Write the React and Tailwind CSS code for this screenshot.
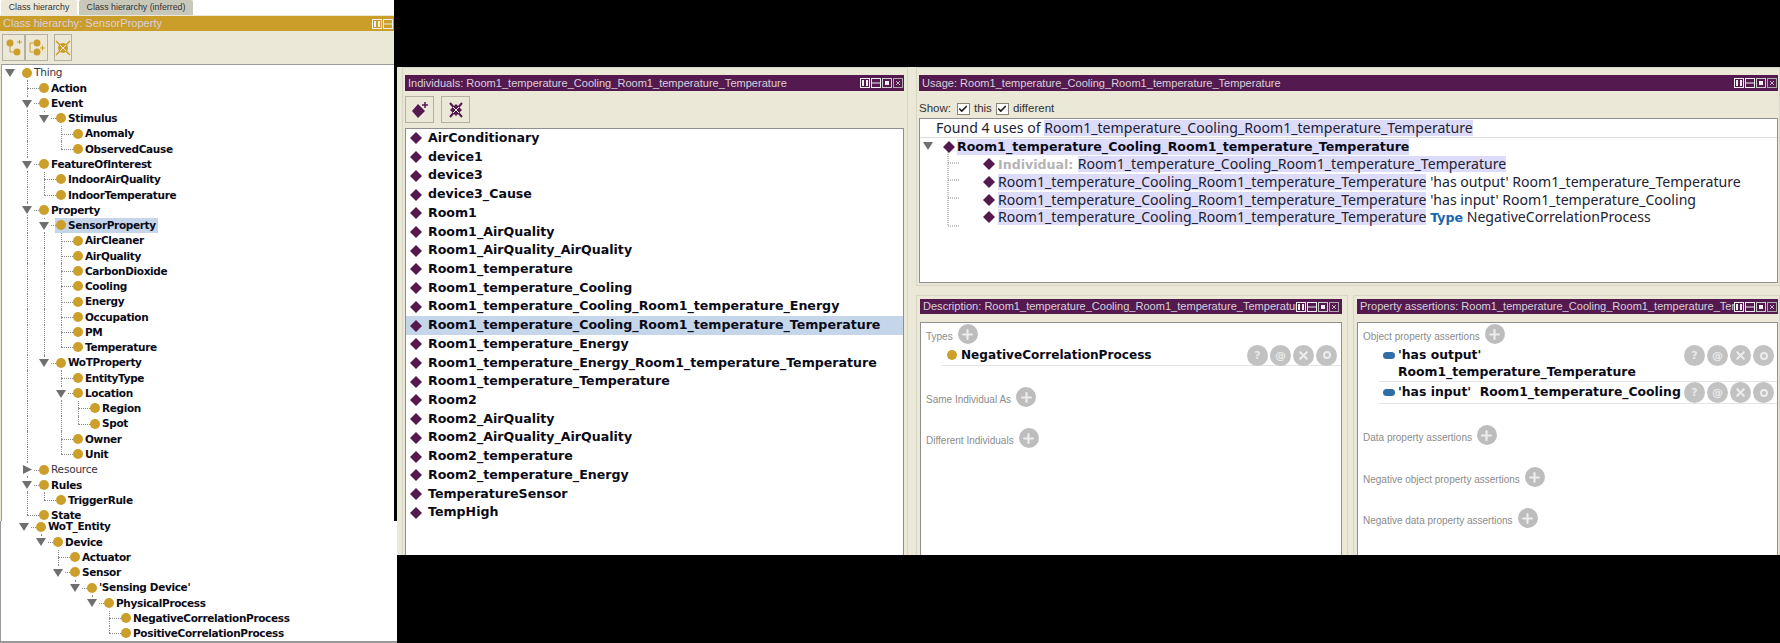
import { Check, Plus, X } from "lucide-react";

const FULL = "Room1_temperature_Cooling_Room1_temperature_Temperature";

const classTree = {
  name: "Thing",
  light: true,
  children: [
    { name: "Action" },
    {
      name: "Event",
      children: [
        {
          name: "Stimulus",
          children: [{ name: "Anomaly" }, { name: "ObservedCause" }],
        },
      ],
    },
    {
      name: "FeatureOfInterest",
      children: [{ name: "IndoorAirQuality" }, { name: "IndoorTemperature" }],
    },
    {
      name: "Property",
      children: [
        {
          name: "SensorProperty",
          selected: true,
          children: [
            { name: "AirCleaner" },
            { name: "AirQuality" },
            { name: "CarbonDioxide" },
            { name: "Cooling" },
            { name: "Energy" },
            { name: "Occupation" },
            { name: "PM" },
            { name: "Temperature" },
          ],
        },
        {
          name: "WoTProperty",
          children: [
            { name: "EntityType" },
            {
              name: "Location",
              children: [{ name: "Region" }, { name: "Spot" }],
            },
            { name: "Owner" },
            { name: "Unit" },
          ],
        },
      ],
    },
    { name: "Resource", light: true, collapsed: true },
    { name: "Rules", children: [{ name: "TriggerRule" }] },
    { name: "State" },
  ],
};

const entityTree = {
  name: "WoT_Entity",
  children: [
    {
      name: "Device",
      children: [
        { name: "Actuator" },
        {
          name: "Sensor",
          children: [
            {
              name: "'Sensing Device'",
              children: [
                {
                  name: "PhysicalProcess",
                  children: [
                    { name: "NegativeCorrelationProcess" },
                    { name: "PositiveCorrelationProcess" },
                  ],
                },
              ],
            },
          ],
        },
      ],
    },
  ],
};

const individuals = [
  "AirConditionary",
  "device1",
  "device3",
  "device3_Cause",
  "Room1",
  "Room1_AirQuality",
  "Room1_AirQuality_AirQuality",
  "Room1_temperature",
  "Room1_temperature_Cooling",
  "Room1_temperature_Cooling_Room1_temperature_Energy",
  FULL,
  "Room1_temperature_Energy",
  "Room1_temperature_Energy_Room1_temperature_Temperature",
  "Room1_temperature_Temperature",
  "Room2",
  "Room2_AirQuality",
  "Room2_AirQuality_AirQuality",
  "Room2_temperature",
  "Room2_temperature_Energy",
  "TemperatureSensor",
  "TempHigh",
];

const flatten = (node, level, guides, last, out) => {
  out.push({ node, level, guides, last });
  const kids = node.children || [];
  kids.forEach((kid, i) => {
    flatten(kid, level + 1, [...guides, !last], i === kids.length - 1, out);
  });
  return out;
};

const Triangle = ({ right }) => (
  <svg width="11" height="11" viewBox="0 0 11 11">
    {right ? (
      <polygon points="1,1 10,5.5 1,10" fill="#6f6f6f" />
    ) : (
      <polygon points="0,2 10,2 5,10" fill="#6f6f6f" />
    )}
  </svg>
);

const Diamond = () => (
  <svg width="12" height="12" viewBox="0 0 12 12" className="shrink-0">
    <polygon points="6,0 12,6 6,12 0,6" fill="#541a4f" />
  </svg>
);

const ClassRow = ({ row, base }) => {
  const { node, level, guides, last } = row;
  const open = node.children && node.children.length > 0;
  return (
    <div
      className="relative flex h-[15.27px] items-stretch"
      style={{ paddingLeft: level === 0 ? base - 5 : base }}
    >
      {guides.slice(1).map((on, i) => (
        <div
          key={i}
          className={`w-[17px] shrink-0 ${on ? "border-l border-dotted border-[#8a8a8a]" : ""}`}
        />
      ))}
      {level > 0 && (
        <div className="relative w-[12px] shrink-0">
          <div
            className={`absolute left-0 top-0 border-l border-dotted border-[#8a8a8a] ${last ? "h-1/2" : "h-full"}`}
          />
          <div className="absolute left-0 right-0 top-1/2 border-t border-dotted border-[#8a8a8a]" />
        </div>
      )}
      <div
        className={`flex items-center gap-[2px] ${node.selected ? "-ml-[1px] bg-[#c5d5ea] pl-[1px] pr-[2px]" : ""}`}
      >
        <span className="h-[10px] w-[10px] shrink-0 rounded-full bg-[#cc9f2b]" />
        <span
          className={`whitespace-nowrap font-['DejaVu_Sans'] text-[10.5px] leading-none ${node.light ? "tracking-[-0.2px] text-[#333344]" : "tracking-[-0.34px] font-bold text-[#0b0b18]"}`}
        >
          {node.name}
        </span>
      </div>
      {(open || node.collapsed) && (
        <span
          className="absolute top-[2px] flex bg-white"
          style={{ left: base - 22 + 17 * level }}
        >
          <Triangle right={node.collapsed} />
        </span>
      )}
    </div>
  );
};

const ClassTree = ({ root, startLevel, base }) => {
  const rows = flatten(root, startLevel, startLevel ? [false] : [], true, []);
  return rows.map((row) => <ClassRow key={row.node.name} row={row} base={base} />);
};

const TitleIcons = ({ count = 4 }) => {
  const icons = [
    <g key="a">
      <rect x="0.5" y="0.5" width="9" height="9" fill="none" stroke="#eee" />
      <rect x="2" y="2" width="2" height="6" fill="#eee" />
      <rect x="6" y="2" width="2" height="6" fill="#eee" />
    </g>,
    <g key="b">
      <rect x="0.5" y="0.5" width="9" height="9" fill="none" stroke="#eee" />
      <line x1="1" y1="5" x2="9" y2="5" stroke="#eee" />
    </g>,
    <g key="c">
      <rect x="0.5" y="0.5" width="9" height="9" fill="none" stroke="#ccc" />
      <rect x="3" y="3" width="4" height="4" fill="#eee" />
    </g>,
    <g key="d">
      <rect x="0.5" y="0.5" width="9" height="9" fill="none" stroke="#aaa" />
      <path d="M3 3 L7 7 M7 3 L3 7" stroke="#bbb" />
    </g>,
  ];
  return (
    <div className="flex shrink-0 items-center gap-[1px]">
      {icons.slice(0, count).map((icon, i) => (
        <svg key={i} width="10" height="10" viewBox="0 0 10 10">
          {icon}
        </svg>
      ))}
    </div>
  );
};

const TitleBar = ({ title, height = "h-[16px]", icons = 4, bg = "bg-[#541a4f]", pr = "pr-[1px]" }) => (
  <div className={`flex ${height} shrink-0 items-center justify-between pl-[3px] ${pr} ${bg}`}>
    <span className="min-w-0 flex-1 overflow-hidden whitespace-nowrap font-['Liberation_Sans'] text-[11.05px] text-[#d9d0dc]">
      {title}
    </span>
    <TitleIcons count={icons} />
  </div>
);

const ToolButton = ({ children, className = "w-[23px]" }) => (
  <div
    className={`flex h-[27px] ${className} shrink-0 items-center justify-center border border-[#b3b1a2] bg-[#ebe8d8]`}
  >
    {children}
  </div>
);

const PlusButton = () => (
  <span className="flex h-[20px] w-[20px] shrink-0 items-center justify-center rounded-full bg-[#bdbdbd]">
    <Plus size={15} strokeWidth={3.5} color="#ececec" />
  </span>
);

const RoundButton = ({ children }) => (
  <span className="flex h-[21px] w-[21px] shrink-0 items-center justify-center rounded-full bg-[#c2c2c2] font-['DejaVu_Sans'] text-[11px] font-bold leading-none text-[#e9e9e9]">
    {children}
  </span>
);

const EntryButtons = () => (
  <div className="flex shrink-0 gap-[2px]">
    <RoundButton>?</RoundButton>
    <RoundButton>@</RoundButton>
    <RoundButton>
      <X size={13} strokeWidth={4} color="#ececec" />
    </RoundButton>
    <RoundButton>
      <span className="h-[8px] w-[8px] rounded-full border-2 border-[#ececec]" />
    </RoundButton>
  </div>
);

const SectionLabel = ({ text, className = "" }) => (
  <div className={`flex h-[20px] items-center gap-[5px] pl-[5px] ${className}`}>
    <span className="whitespace-nowrap pt-[4px] font-['Liberation_Sans'] text-[10px] font-normal text-[#8c8c8c]">
      {text}
    </span>
    <PlusButton />
  </div>
);

const Checkbox = () => (
  <span className="flex h-[12px] w-[13px] items-center justify-center border border-[#85857a] bg-white">
    <Check size={10} strokeWidth={4} color="#222" />
  </span>
);

const Mark = ({ children }) => (
  <span className="inline-block h-[16px] bg-[#dcdcfa] leading-[16px]">{children}</span>
);

const UsageRow = ({ children }) => (
  <div className="flex h-[17.67px] items-center gap-[3px] pl-[63px]">
    <Diamond />
    <span className="whitespace-pre leading-[16px]">{children}</span>
  </div>
);

const App = () => {
  return (
    <div className="flex h-[643px] w-[1780px] overflow-hidden bg-black font-['Liberation_Sans']">
      {/* left: class hierarchy */}
      <div className="flex w-[397px] shrink-0 flex-col">
        <div className="flex h-[521px] w-[394px] flex-col bg-[#ebe8d8]">
          <div className="flex h-[15px] shrink-0 items-end gap-[2px] whitespace-nowrap bg-white pl-[1px] font-['Liberation_Sans'] text-[8.8px] text-[#333]">
            <div className="flex h-[15px] w-[76px] items-center justify-center rounded-t-[2px] bg-[#ebe8d8]">
              Class hierarchy
            </div>
            <div className="flex h-[15px] w-[114px] items-center justify-center rounded-t-[2px] bg-[#c8c8ba]">
              Class hierarchy (inferred)
            </div>
          </div>
          <div className="mt-[1px]">
            <TitleBar title="Class hierarchy: SensorProperty" icons={2} bg="bg-[#cb9e2a]" height="h-[15px]" />
          </div>
          <div className="flex h-[33px] shrink-0 items-center pl-[2px]">
            <ToolButton>
              <svg width="16" height="18" viewBox="0 0 16 18">
                <circle cx="4" cy="4" r="3.5" fill="#cb9e2a" />
                <circle cx="11" cy="13" r="3.5" fill="#cb9e2a" />
                <path d="M4 6 V13 H8" stroke="#cb9e2a" fill="none" />
                <path d="M11 3 H16 M13.5 1 V5" stroke="#cb9e2a" />
              </svg>
            </ToolButton>
            <ToolButton>
              <svg width="16" height="18" viewBox="0 0 16 18">
                <circle cx="8" cy="4" r="3.5" fill="#cb9e2a" />
                <circle cx="8" cy="13" r="3.5" fill="#cb9e2a" />
                <path d="M4 4 H1 V13 H4" stroke="#cb9e2a" fill="none" />
                <path d="M11 9 H16 M13.5 6.5 V11.5" stroke="#cb9e2a" />
              </svg>
            </ToolButton>
            <ToolButton className="ml-[6px]">
              <svg width="16" height="16" viewBox="0 0 16 16">
                <circle cx="8" cy="8" r="5" fill="#cb9e2a" />
                <path d="M1 1 L15 15 M15 1 L1 15" stroke="#cb9e2a" strokeWidth="1.5" />
                <path d="M5 5 L11 11 M11 5 L5 11" stroke="#ebe8d8" />
              </svg>
            </ToolButton>
          </div>
          <div className="ml-[1px] flex-1 border-l border-t border-[#9a9a9a] bg-white">
            <ClassTree root={classTree} startLevel={0} base={25} />
          </div>
        </div>
        <div className="h-[122px] overflow-hidden border-b-2 border-l border-[#999] bg-white">
          <div className="-mt-[2px]">
            <ClassTree root={entityTree} startLevel={1} base={23} />
          </div>
        </div>
      </div>

      {/* right: individuals and usage */}
      <div className="mt-[67px] flex h-[488px] min-w-0 flex-1 bg-[#ebe8d8] pl-[5px]">
        <div className="flex w-[506px] shrink-0 flex-col border border-b-0 border-[#d8d6c6] pt-[7px] pl-[2px] pr-[3px]">
          <TitleBar title={`Individuals: ${FULL}`} />
          <div className="flex h-[37px] shrink-0 items-center gap-[7px]">
            <ToolButton className="w-[29px]">
              <svg width="18" height="18" viewBox="0 0 18 18">
                <polygon points="7,3 14,10 7,17 1,10" fill="#541a4f" />
                <path d="M11 4 H17 M14 1 V7" stroke="#541a4f" strokeWidth="1.5" />
              </svg>
            </ToolButton>
            <ToolButton className="w-[29px]">
              <svg width="18" height="18" viewBox="0 0 18 18">
                <polygon points="9,3 15,9 9,15 3,9" fill="#541a4f" />
                <path d="M3 2 L15 16 M15 2 L3 16" stroke="#541a4f" strokeWidth="2" />
                <path d="M6 6 L12 12 M12 6 L6 12" stroke="#ebe8d8" />
              </svg>
            </ToolButton>
          </div>
          <div className="flex-1 border border-b-0 border-[#8f8f8f] bg-white">
            {individuals.map((name) => (
              <div
                key={name}
                className={`flex h-[18.73px] items-center gap-[6px] pl-[4px] font-['DejaVu_Sans'] text-[12.6px] font-bold text-[#0b0b18] ${name === FULL ? "bg-[#c5d5ea]" : ""}`}
              >
                <Diamond />
                <span className="whitespace-nowrap">{name}</span>
              </div>
            ))}
          </div>
        </div>

        <div className="ml-[8px] flex min-w-0 flex-1 flex-col">
          <div className="flex h-[219px] shrink-0 flex-col border border-[#d8d6c6] pt-[7px] pl-[2px] pr-[1px]">
            <TitleBar title={`Usage: ${FULL}`} />
            <div className="flex h-[27px] shrink-0 items-center gap-[4px] pt-[8px] text-[11.5px] text-[#333]">
              <span className="mr-[2px]">Show:</span>
              <Checkbox />
              <span>this</span>
              <Checkbox />
              <span>different</span>
            </div>
            <div className="h-[165px] border border-[#8f8f8f] bg-white font-['Noto_Sans'] text-[14.1px] text-[#222233]">
              <div className="flex h-[19px] items-center border-b border-[#dcdcdc] pl-[16px]">
                <span className="whitespace-pre leading-[16px]">Found 4 uses of </span>
                <Mark>{FULL}</Mark>
              </div>
              <div className="relative">
                <svg width="16" height="90" className="absolute left-[27px] top-[14px]">
                  <path
                    d="M1 0 V74 H13 M1 11 H13 M1 28 H13 M1 46 H13"
                    stroke="#8a8a8a"
                    strokeDasharray="1 1"
                    fill="none"
                  />
                </svg>
                <div className="flex h-[17.67px] items-center gap-[2px] pl-[23px]">
                  <span className="absolute left-[3px] top-[2px] flex">
                    <Triangle />
                  </span>
                  <Diamond />
                  <span className="bg-[#dcdcfa] font-['DejaVu_Sans'] text-[12.6px] font-bold leading-[16px] text-[#0b0b18]">{FULL}</span>
                </div>
                <UsageRow>
                  <span className="font-['DejaVu_Sans'] text-[12.6px] font-bold text-[#b4b4b4]">Individual: </span>
                  <Mark>{FULL}</Mark>
                </UsageRow>
                <UsageRow>
                  <Mark>{FULL}</Mark> 'has output' Room1_temperature_Temperature
                </UsageRow>
                <UsageRow>
                  <Mark>{FULL}</Mark> 'has input' Room1_temperature_Cooling
                </UsageRow>
                <UsageRow>
                  <Mark>{FULL}</Mark> <span className="font-['DejaVu_Sans'] text-[12.6px] font-bold text-[#1a66b0]">Type</span> NegativeCorrelationProcess
                </UsageRow>
              </div>
            </div>
          </div>

          <div className="mt-[9px] flex min-h-0 flex-1 gap-[5px]">
            <div className="flex w-[432px] shrink-0 flex-col border border-b-0 border-[#d8d6c6] pt-[3px] pl-[3px] pr-[5px]">
              <TitleBar title={`Description: ${FULL}`} height="h-[15px]" pr="pr-[3px]" />
              <div className="mt-[8px] flex-1 border border-b-0 border-[#8f8f8f] bg-white pt-[1px]">
                <SectionLabel text="Types" />
                <div className="ml-[20px] mt-[1px] flex h-[21px] items-center justify-between border-b border-[#e5e5e5] pr-[4px]">
                  <div className="flex items-center gap-[4px] pl-[6px]">
                    <span className="h-[10px] w-[10px] rounded-full bg-[#cc9f2b]" />
                    <span className="font-['DejaVu_Sans'] text-[12.1px] font-bold text-[#0b0b18]">
                      NegativeCorrelationProcess
                    </span>
                  </div>
                  <EntryButtons />
                </div>
                <SectionLabel text="Same Individual As" className="mt-[21px]" />
                <SectionLabel text="Different Individuals" className="mt-[21px]" />
              </div>
            </div>

            <div className="flex min-w-0 flex-1 flex-col border border-b-0 border-[#d8d6c6] pt-[3px] pl-[3px] pr-[1px]">
              <TitleBar title={`Property assertions: ${FULL}`} height="h-[15px]" />
              <div className="mt-[8px] flex-1 border border-b-0 border-[#8f8f8f] bg-white pt-[1px] font-['DejaVu_Sans'] text-[12.4px] font-bold text-[#0b0b18]">
                <SectionLabel text="Object property assertions" />
                <div className="ml-[21px] mt-[1px] flex h-[37px] items-start justify-between border-b border-[#e5e5e5] pr-[3px]">
                  <div className="flex items-start gap-[3px] pl-[4px] pt-[1px]">
                    <span className="mt-[6px] h-[7px] w-[12px] rounded-full bg-[#2f6fa5]" />
                    <span className="leading-[17px]">
                      'has output'
                      <br />
                      Room1_temperature_Temperature
                    </span>
                  </div>
                  <EntryButtons />
                </div>
                <div className="ml-[21px] flex h-[22px] items-center justify-between border-b border-[#e5e5e5] pr-[3px]">
                  <div className="flex items-center gap-[3px] pl-[4px]">
                    <span className="h-[7px] w-[12px] rounded-full bg-[#2f6fa5]" />
                    <span className="whitespace-pre">'has input'  Room1_temperature_Cooling</span>
                  </div>
                  <EntryButtons />
                </div>
                <SectionLabel text="Data property assertions" className="mt-[21px]" />
                <SectionLabel text="Negative object property assertions" className="mt-[22px]" />
                <SectionLabel text="Negative data property assertions" className="mt-[21px]" />
              </div>
            </div>
          </div>
        </div>
      </div>
    </div>
  );
};

export default App;
